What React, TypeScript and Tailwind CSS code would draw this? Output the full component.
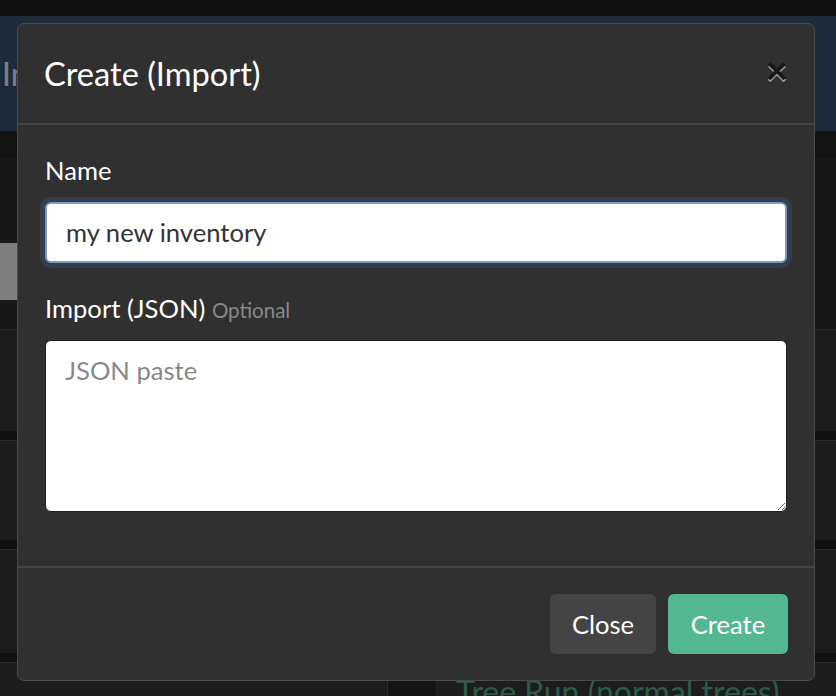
import React from "react";

export default function App() {
  return (
    <div className="relative w-[836px] h-[696px] overflow-hidden bg-[#222222] font-['Lato','Noto_Sans',sans-serif]">
      {/* Underlying page */}
      <div className="flex flex-col">
        <div className="h-[16px] bg-[#222222]" />
        <nav className="h-[115px] bg-[#3b587a] flex items-center pl-[2px]">
          <span className="text-[32px] leading-[48px] text-white">Inventory</span>
        </nav>
        <div className="h-[27px] bg-[#262626]" />
        <div className="h-[171px] bg-[#303030] flex flex-col">
          <div className="h-[85px]" />
          <div className="h-[57px] w-[300px] bg-white" />
        </div>
        <div className="flex flex-col gap-[9px]">
          <div className="h-[102px] bg-[#383838] border-t border-[#545454]" />
          <div className="h-[100px] bg-[#383838] border-t border-[#545454]" />
          <div className="h-[104px] bg-[#383838] border-t border-[#545454]" />
          <div className="h-[102px] bg-[#3a3a3a] border-t border-[#545454] flex">
            <div className="w-[388px] border-r border-[#545454]" />
            <div className="w-[49px] bg-[#2a2a2a] border-r border-[#444]" />
            <div className="pl-[19px] pt-[10px]">
              <span className="text-[32px] leading-[38px] text-[#53b892] whitespace-nowrap">
                Tree Run (normal trees)
              </span>
            </div>
          </div>
        </div>
      </div>

      {/* Backdrop */}
      <div className="absolute inset-0 bg-black/50" />

      {/* Modal */}
      <div className="absolute left-[17px] top-[23px] w-[798px] bg-[#303030] border border-[#4a4a4a] rounded-[7px] flex flex-col">
        <div className="flex items-start justify-between px-[26px] pt-[26px] pb-[25px] border-b-2 border-[#444]">
          <h5 className="text-[32.6px] leading-[48px] text-white">Create (Import)</h5>
          <button className="-m-[26px] p-[26px] text-[39px] font-bold leading-none text-black opacity-50 [text-shadow:0_1.6px_0_#fff]">
            ×
          </button>
        </div>
        <div className="flex flex-col px-[27px] pt-[26px] pb-[54px]">
          <label className="h-[38px] text-[25.6px] leading-[38px] text-white mb-[13px]">Name</label>
          <div className="h-[61px] rounded-[6px] bg-white border-2 border-[#7b9bc4] shadow-[0_0_0_5px_#353e4a] flex items-center px-[19px] text-[25.6px] text-[#333]">
            my new inventory
          </div>
          <label className="mt-[26px] h-[38px] text-[25.6px] leading-[38px] text-white mb-[13px] whitespace-nowrap">
            Import (JSON) <span className="text-[20.5px] leading-none text-[#888]">Optional</span>
          </label>
          <textarea
            rows={4}
            placeholder="JSON paste"
            className="h-[172px] rounded-[6px] bg-white border-[1.6px] border-[#1e1e1e] px-[19.2px] py-[9.6px] text-[25.6px] leading-[38.4px] text-[#333] placeholder:text-[#888] outline-none font-['Lato',sans-serif]"
          />
        </div>
        <div className="flex justify-end gap-[12px] px-[26px] pt-[26px] pb-[26px] border-t-2 border-[#444]">
          <button className="w-[106px] h-[60px] rounded-[6px] bg-[#444444] text-white text-[25.6px] flex items-center justify-center">
            Close
          </button>
          <button className="w-[120px] h-[60px] rounded-[6px] bg-[#53b892] text-white text-[25.6px] flex items-center justify-center">
            Create
          </button>
        </div>
      </div>
    </div>
  );
}
